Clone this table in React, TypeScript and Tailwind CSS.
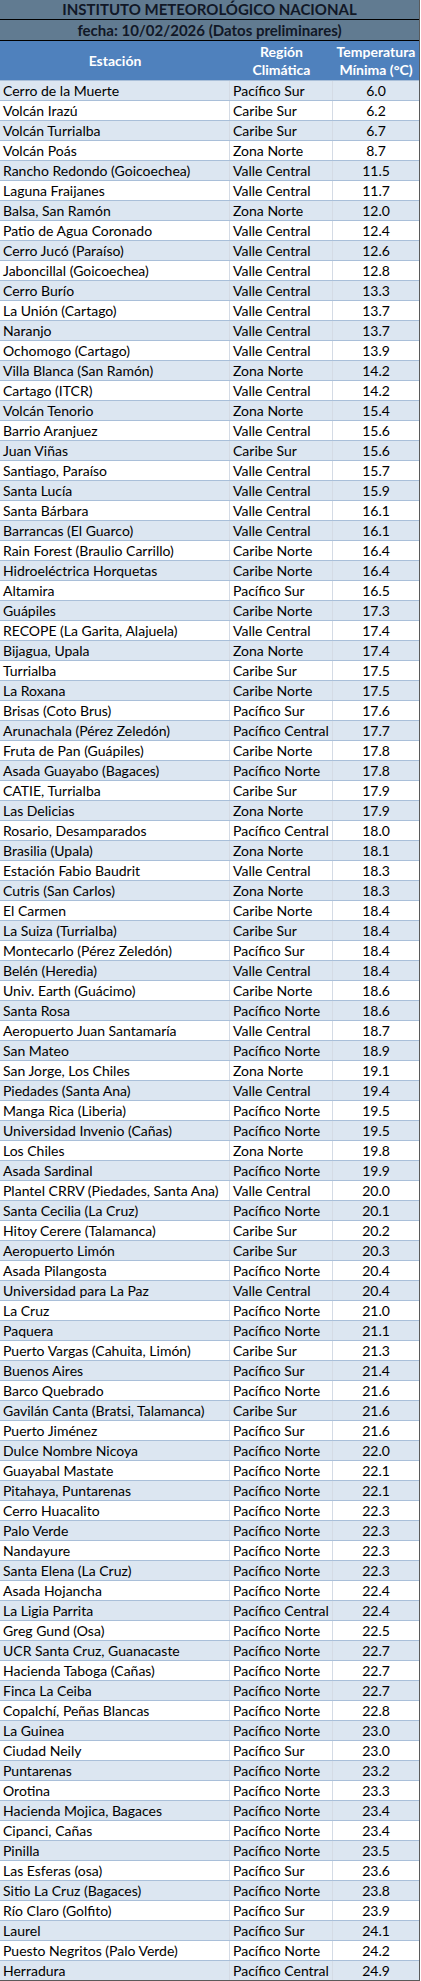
import React from "react";

const rows: [string, string, string][] = [
  ["Cerro de la Muerte", "Pacífico Sur", "6.0"],
  ["Volcán Irazú", "Caribe Sur", "6.2"],
  ["Volcán Turrialba", "Caribe Sur", "6.7"],
  ["Volcán Poás", "Zona Norte", "8.7"],
  ["Rancho Redondo (Goicoechea)", "Valle Central", "11.5"],
  ["Laguna Fraijanes", "Valle Central", "11.7"],
  ["Balsa, San Ramón", "Zona Norte", "12.0"],
  ["Patio de Agua Coronado", "Valle Central", "12.4"],
  ["Cerro Jucó (Paraíso)", "Valle Central", "12.6"],
  ["Jaboncillal (Goicoechea)", "Valle Central", "12.8"],
  ["Cerro Burío", "Valle Central", "13.3"],
  ["La Unión (Cartago)", "Valle Central", "13.7"],
  ["Naranjo", "Valle Central", "13.7"],
  ["Ochomogo (Cartago)", "Valle Central", "13.9"],
  ["Villa Blanca (San Ramón)", "Zona Norte", "14.2"],
  ["Cartago (ITCR)", "Valle Central", "14.2"],
  ["Volcán Tenorio", "Zona Norte", "15.4"],
  ["Barrio Aranjuez", "Valle Central", "15.6"],
  ["Juan Viñas", "Caribe Sur", "15.6"],
  ["Santiago, Paraíso", "Valle Central", "15.7"],
  ["Santa Lucía", "Valle Central", "15.9"],
  ["Santa Bárbara", "Valle Central", "16.1"],
  ["Barrancas (El Guarco)", "Valle Central", "16.1"],
  ["Rain Forest (Braulio Carrillo)", "Caribe Norte", "16.4"],
  ["Hidroeléctrica Horquetas", "Caribe Norte", "16.4"],
  ["Altamira", "Pacífico Sur", "16.5"],
  ["Guápiles", "Caribe Norte", "17.3"],
  ["RECOPE (La Garita, Alajuela)", "Valle Central", "17.4"],
  ["Bijagua, Upala", "Zona Norte", "17.4"],
  ["Turrialba", "Caribe Sur", "17.5"],
  ["La Roxana", "Caribe Norte", "17.5"],
  ["Brisas (Coto Brus)", "Pacífico Sur", "17.6"],
  ["Arunachala (Pérez Zeledón)", "Pacífico Central", "17.7"],
  ["Fruta de Pan (Guápiles)", "Caribe Norte", "17.8"],
  ["Asada Guayabo (Bagaces)", "Pacífico Norte", "17.8"],
  ["CATIE, Turrialba", "Caribe Sur", "17.9"],
  ["Las Delicias", "Zona Norte", "17.9"],
  ["Rosario, Desamparados", "Pacífico Central", "18.0"],
  ["Brasilia (Upala)", "Zona Norte", "18.1"],
  ["Estación Fabio Baudrit", "Valle Central", "18.3"],
  ["Cutris (San Carlos)", "Zona Norte", "18.3"],
  ["El Carmen", "Caribe Norte", "18.4"],
  ["La Suiza (Turrialba)", "Caribe Sur", "18.4"],
  ["Montecarlo (Pérez Zeledón)", "Pacífico Sur", "18.4"],
  ["Belén (Heredia)", "Valle Central", "18.4"],
  ["Univ. Earth (Guácimo)", "Caribe Norte", "18.6"],
  ["Santa Rosa", "Pacífico Norte", "18.6"],
  ["Aeropuerto Juan Santamaría", "Valle Central", "18.7"],
  ["San Mateo", "Pacífico Norte", "18.9"],
  ["San Jorge, Los Chiles", "Zona Norte", "19.1"],
  ["Piedades (Santa Ana)", "Valle Central", "19.4"],
  ["Manga Rica (Liberia)", "Pacífico Norte", "19.5"],
  ["Universidad Invenio (Cañas)", "Pacífico Norte", "19.5"],
  ["Los Chiles", "Zona Norte", "19.8"],
  ["Asada Sardinal", "Pacífico Norte", "19.9"],
  ["Plantel CRRV (Piedades, Santa Ana)", "Valle Central", "20.0"],
  ["Santa Cecilia (La Cruz)", "Pacífico Norte", "20.1"],
  ["Hitoy Cerere (Talamanca)", "Caribe Sur", "20.2"],
  ["Aeropuerto Limón", "Caribe Sur", "20.3"],
  ["Asada Pilangosta", "Pacífico Norte", "20.4"],
  ["Universidad para La Paz", "Valle Central", "20.4"],
  ["La Cruz", "Pacífico Norte", "21.0"],
  ["Paquera", "Pacífico Norte", "21.1"],
  ["Puerto Vargas (Cahuita, Limón)", "Caribe Sur", "21.3"],
  ["Buenos Aires", "Pacífico Sur", "21.4"],
  ["Barco Quebrado", "Pacífico Norte", "21.6"],
  ["Gavilán Canta (Bratsi, Talamanca)", "Caribe Sur", "21.6"],
  ["Puerto Jiménez", "Pacífico Sur", "21.6"],
  ["Dulce Nombre Nicoya", "Pacífico Norte", "22.0"],
  ["Guayabal Mastate", "Pacífico Norte", "22.1"],
  ["Pitahaya, Puntarenas", "Pacífico Norte", "22.1"],
  ["Cerro Huacalito", "Pacífico Norte", "22.3"],
  ["Palo Verde", "Pacífico Norte", "22.3"],
  ["Nandayure", "Pacífico Norte", "22.3"],
  ["Santa Elena (La Cruz)", "Pacífico Norte", "22.3"],
  ["Asada Hojancha", "Pacífico Norte", "22.4"],
  ["La Ligia Parrita", "Pacífico Central", "22.4"],
  ["Greg Gund (Osa)", "Pacífico Norte", "22.5"],
  ["UCR Santa Cruz, Guanacaste", "Pacífico Norte", "22.7"],
  ["Hacienda Taboga (Cañas)", "Pacífico Norte", "22.7"],
  ["Finca La Ceiba", "Pacífico Norte", "22.7"],
  ["Copalchí, Peñas Blancas", "Pacífico Norte", "22.8"],
  ["La Guinea", "Pacífico Norte", "23.0"],
  ["Ciudad Neily", "Pacífico Sur", "23.0"],
  ["Puntarenas", "Pacífico Norte", "23.2"],
  ["Orotina", "Pacífico Norte", "23.3"],
  ["Hacienda Mojica, Bagaces", "Pacífico Norte", "23.4"],
  ["Cipanci, Cañas", "Pacífico Norte", "23.4"],
  ["Pinilla", "Pacífico Norte", "23.5"],
  ["Las Esferas (osa)", "Pacífico Sur", "23.6"],
  ["Sitio La Cruz (Bagaces)", "Pacífico Norte", "23.8"],
  ["Río Claro (Golfito)", "Pacífico Sur", "23.9"],
  ["Laurel", "Pacífico Sur", "24.1"],
  ["Puesto Negritos (Palo Verde)", "Pacífico Norte", "24.2"],
  ["Herradura", "Pacífico Central", "24.9"],
];

export default function App() {
  return (
    <div
      className="w-[421px] bg-white text-[14px] text-black"
      style={{ fontFamily: "Lato, 'Open Sans', sans-serif" }}
    >
      <div className="w-[420px] border-r border-b border-[#5a5a5a]">
        <div className="h-[20px] border-b border-black bg-[#617b91] flex items-center justify-center font-bold text-[15px] text-[#111827] leading-none">
          INSTITUTO METEOROLÓGICO NACIONAL
        </div>
        <div className="h-[21px] border-b border-black bg-[#617b91] flex items-center justify-center font-bold text-[15px] text-[#111827] leading-none">
          fecha: 10/02/2026 (Datos preliminares)
        </div>
        <div className="h-[39px] bg-[#4f81bd] flex text-white font-bold leading-[18px]">
          <div className="w-[230px] flex items-center justify-center">Estación</div>
          <div className="w-[103px] flex flex-col items-center justify-center text-center">
            <span>Región</span>
            <span>Climática</span>
          </div>
          <div className="flex-1 flex flex-col items-center justify-center text-center">
            <span>Temperatura</span>
            <span>Mínima (°C)</span>
          </div>
        </div>
        {rows.map(([st, reg, t], i) => (
          <div
            key={i}
            className={`h-[20px] flex border-t border-[#a9bfd9] ${i % 2 === 0 ? "bg-[#dce6f1]" : "bg-white"}`}
          >
            <div className="w-[230px] pl-[3px] pt-[1px] flex items-center whitespace-nowrap overflow-hidden border-r border-[#d4dbe5] leading-none">
              {st}
            </div>
            <div className="w-[103px] pl-[3px] pt-[1px] flex items-center whitespace-nowrap overflow-hidden border-r border-[#d4dbe5] leading-none">
              {reg}
            </div>
            <div className="flex-1 pt-[1px] flex items-center justify-center leading-none">{t}</div>
          </div>
        ))}
      </div>
    </div>
  );
}
